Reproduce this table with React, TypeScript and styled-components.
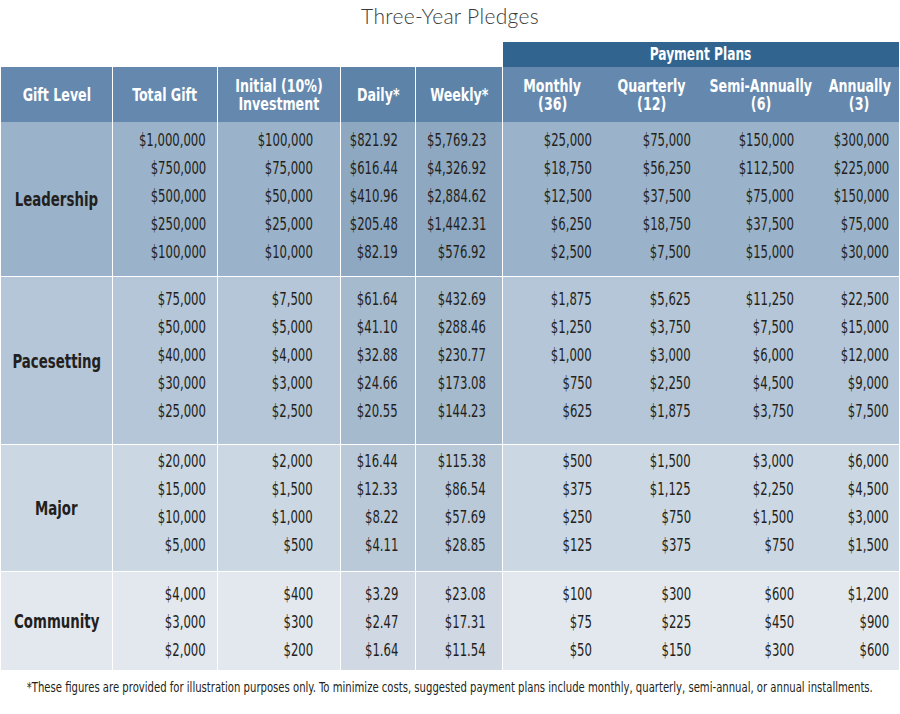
import React from 'react'
import styled, { createGlobalStyle } from 'styled-components'

const GlobalStyle = createGlobalStyle`
  html, body {
    margin: 0;
    padding: 0;
    background: #ffffff;
  }
`

const condensed = `"DejaVu Sans Condensed", "Roboto", sans-serif`

const COLS = '111px 105px 123px 75px 87px 100px 100px 118px 79px'
// right padding of the numbers in each value column
const PAD_RIGHT = [11, 27, 17, 16, 10, 11, 26, 10]
// columns that sit on a darker tint (Daily, Weekly)
const SHADED = [false, false, true, true, false, false, false, false]
// columns with a white rule on their left side
const RULED = [true, true, true, true, true, false, false, false]

const Page = styled.div`
  width: 900px;
  padding: 0 1px;
  box-sizing: border-box;
  overflow: hidden;
`

// the reference face is a narrow condensed sans; squeeze the nearest installed one
const Squeeze = styled.span<{ $scale: number; $origin: string }>`
  display: inline-block;
  white-space: nowrap;
  transform: scaleX(${p => p.$scale});
  transform-origin: ${p => p.$origin};
`

const Title = styled.div`
  height: 42px;
  padding-top: 3px;
  box-sizing: border-box;
  text-align: center;
  font-family: "Lato", "Open Sans", sans-serif;
  font-weight: 300;
  font-size: 21px;
  color: #3a3a3a;
  letter-spacing: 0.3px;
`

const Grid = styled.div`
  display: grid;
  grid-template-columns: ${COLS};
`

const PlansBar = styled.div`
  grid-column: 6 / span 4;
  height: 25px;
  background: #31658f;
  border-left: 1px solid #ffffff;
  display: flex;
  justify-content: center;
  color: #ffffff;
  font-family: ${condensed};
  font-weight: 700;
  font-size: 17px;
  line-height: 24px;
`

const Spacer = styled.div`
  grid-column: 1 / span 5;
`

const HeadCell = styled.div<{ $ruled: boolean; $shaded: boolean }>`
  height: 55px;
  display: flex;
  flex-direction: column;
  align-items: center;
  justify-content: center;
  text-align: center;
  background: ${p => (p.$shaded ? '#5d83a8' : '#6589ae')};
  border-left: ${p => (p.$ruled ? '1px solid #ffffff' : '0')};
  color: #ffffff;
  font-family: ${condensed};
  font-weight: 700;
  font-size: 18px;
  line-height: 18px;
`

const Group = styled.div<{ $first: boolean }>`
  display: grid;
  grid-template-columns: ${COLS};
  border-top: ${p => (p.$first ? '0' : '1px solid rgba(255,255,255,0.35)')};
`

const LabelCell = styled.div<{ $bg: string }>`
  display: flex;
  align-items: center;
  justify-content: center;
  background: ${p => p.$bg};
  color: #231f20;
  font-family: ${condensed};
  font-weight: 700;
  font-size: 19px;
`

const ValueCell = styled.div<{ $bg: string; $ruled: boolean; $padR: number; $padT: number; $padB: number }>`
  background: ${p => p.$bg};
  border-left: ${p => (p.$ruled ? '1px solid #ffffff' : '0')};
  padding: ${p => `${p.$padT}px ${p.$padR}px ${p.$padB}px 0`};
  display: flex;
  flex-direction: column;
  align-items: flex-end;
`

const Value = styled.div`
  height: 28px;
  line-height: 28px;
  color: #231f20;
  font-family: ${condensed};
  font-size: 18px;
`

const Note = styled.div`
  padding-top: 9px;
  display: flex;
  justify-content: center;
  color: #231f20;
  font-family: ${condensed};
  font-size: 14px;
`

type GroupData = {
  label: string
  bg: string
  shade: string
  padT: number
  padB: number
  rows: string[][]
}

const groups: GroupData[] = [
  {
    label: 'Leadership',
    bg: '#9ab3ca',
    shade: '#8ea8c1',
    padT: 4,
    padB: 10,
    rows: [
      ['$1,000,000', '$100,000', '$821.92', '$5,769.23', '$25,000', '$75,000', '$150,000', '$300,000'],
      ['$750,000', '$75,000', '$616.44', '$4,326.92', '$18,750', '$56,250', '$112,500', '$225,000'],
      ['$500,000', '$50,000', '$410.96', '$2,884.62', '$12,500', '$37,500', '$75,000', '$150,000'],
      ['$250,000', '$25,000', '$205.48', '$1,442.31', '$6,250', '$18,750', '$37,500', '$75,000'],
      ['$100,000', '$10,000', '$82.19', '$576.92', '$2,500', '$7,500', '$15,000', '$30,000'],
    ],
  },
  {
    label: 'Pacesetting',
    bg: '#b4c6d7',
    shade: '#a6bace',
    padT: 8,
    padB: 19,
    rows: [
      ['$75,000', '$7,500', '$61.64', '$432.69', '$1,875', '$5,625', '$11,250', '$22,500'],
      ['$50,000', '$5,000', '$41.10', '$288.46', '$1,250', '$3,750', '$7,500', '$15,000'],
      ['$40,000', '$4,000', '$32.88', '$230.77', '$1,000', '$3,000', '$6,000', '$12,000'],
      ['$30,000', '$3,000', '$24.66', '$173.08', '$750', '$2,250', '$4,500', '$9,000'],
      ['$25,000', '$2,500', '$20.55', '$144.23', '$625', '$1,875', '$3,750', '$7,500'],
    ],
  },
  {
    label: 'Major',
    bg: '#cbd8e3',
    shade: '#bac9d8',
    padT: 2,
    padB: 12,
    rows: [
      ['$20,000', '$2,000', '$16.44', '$115.38', '$500', '$1,500', '$3,000', '$6,000'],
      ['$15,000', '$1,500', '$12.33', '$86.54', '$375', '$1,125', '$2,250', '$4,500'],
      ['$10,000', '$1,000', '$8.22', '$57.69', '$250', '$750', '$1,500', '$3,000'],
      ['$5,000', '$500', '$4.11', '$28.85', '$125', '$375', '$750', '$1,500'],
    ],
  },
  {
    label: 'Community',
    bg: '#e3e8ef',
    shade: '#d0d8e3',
    padT: 8,
    padB: 6,
    rows: [
      ['$4,000', '$400', '$3.29', '$23.08', '$100', '$300', '$600', '$1,200'],
      ['$3,000', '$300', '$2.47', '$17.31', '$75', '$225', '$450', '$900'],
      ['$2,000', '$200', '$1.64', '$11.54', '$50', '$150', '$300', '$600'],
    ],
  },
]

const headers: string[][] = [
  ['Gift Level'],
  ['Total Gift'],
  ['Initial (10%)', 'Investment'],
  ['Daily*'],
  ['Weekly*'],
  ['Monthly', '(36)'],
  ['Quarterly', '(12)'],
  ['Semi-Annually', '(6)'],
  ['Annually', '(3)'],
]

const App = () => {
  return (
    <Page>
      <GlobalStyle />
      <Title>Three-Year Pledges</Title>
      <Grid>
        <Spacer />
        <PlansBar>
          <Squeeze $scale={0.8} $origin="center">Payment Plans</Squeeze>
        </PlansBar>
        {headers.map((lines, i) => (
          <HeadCell key={i} $ruled={i > 0 && i <= 5} $shaded={i === 3 || i === 4}>
            {lines.map(l => (
              <Squeeze key={l} $scale={0.78} $origin="center">
                {l}
              </Squeeze>
            ))}
          </HeadCell>
        ))}
      </Grid>
      {groups.map((g, gi) => (
        <Group key={g.label} $first={gi === 0}>
          <LabelCell $bg={g.bg}>
            <Squeeze $scale={0.78} $origin="center">{g.label}</Squeeze>
          </LabelCell>
          {PAD_RIGHT.map((pad, ci) => (
            <ValueCell
              key={ci}
              $bg={SHADED[ci] ? g.shade : g.bg}
              $ruled={RULED[ci]}
              $padR={pad}
              $padT={g.padT}
              $padB={g.padB}
            >
              {g.rows.map((r, ri) => (
                <Value key={ri}>
                  <Squeeze $scale={0.72} $origin="right">{r[ci]}</Squeeze>
                </Value>
              ))}
            </ValueCell>
          ))}
        </Group>
      ))}
      <Note>
        <Squeeze $scale={0.8} $origin="center">
          *These figures are provided for illustration purposes only. To minimize costs, suggested payment plans include
          monthly, quarterly, semi-annual, or annual installments.
        </Squeeze>
      </Note>
    </Page>
  )
}

export default App
